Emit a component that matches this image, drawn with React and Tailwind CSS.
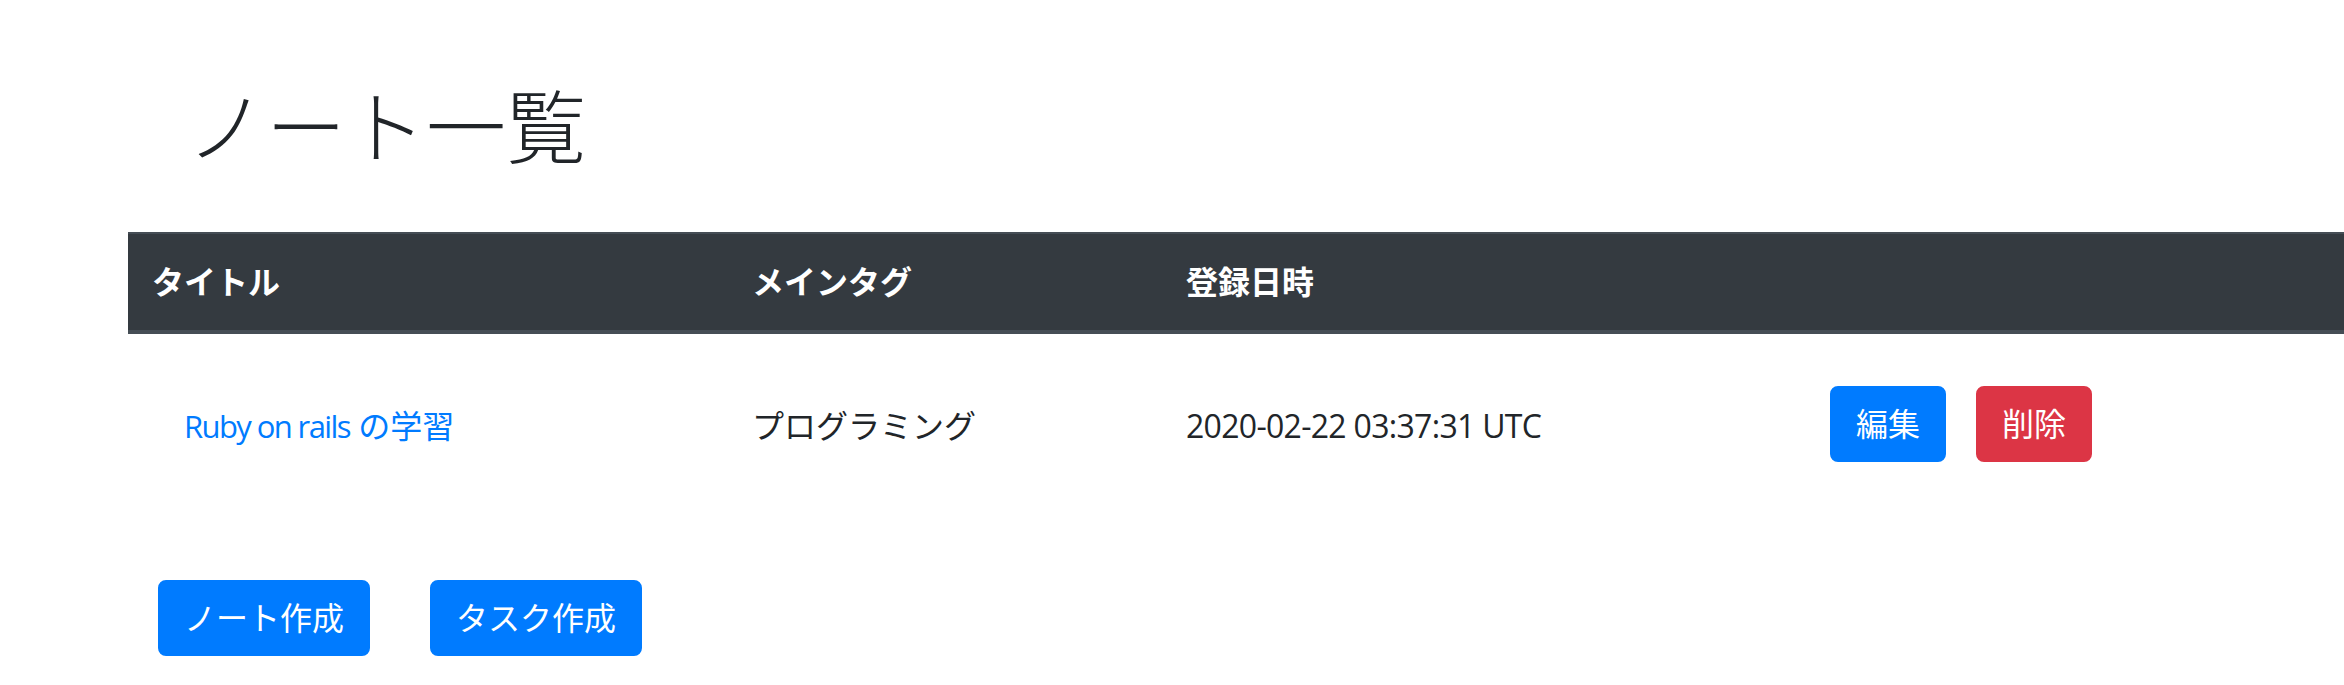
const FONT = "font-['Open_Sans','Noto_Sans_CJK_JP',sans-serif]";

const notes = [
  { id: 1, title: 'Ruby on rails', titleJa: 'の学習', tag: 'プログラミング', createdAt: '2020-02-22 03:37:31 UTC' }
];

function Btn({ color = 'blue', children }) {
  const bg = color === 'red' ? 'bg-[#dc3545] border-[#dc3545]' : 'bg-[#007bff] border-[#007bff]';
  return (
    <button className={`${bg} border-2 text-white text-[32px] leading-[48px] px-6 py-3 rounded-[8px] whitespace-nowrap`}>
      {children}
    </button>
  );
}

export default function App() {
  return (
    <div className={`${FONT} bg-white text-[#212529] min-h-[685px] overflow-hidden`}>
      <h1 className="text-[80px] leading-[96px] font-light pt-[78px] pl-[186px] text-[#212529]">
        ノート一覧
      </h1>

      <table className="mt-[58px] ml-[128px] w-[2216px] border-collapse text-[32px] leading-[48px]">
        <thead>
          <tr className="bg-[#343a40] text-white">
            <th className="w-[600px] text-left font-bold px-6 py-6 border-t-2 border-b-4 border-[#454d55]">タイトル</th>
            <th className="w-[434px] text-left font-bold px-6 py-6 border-t-2 border-b-4 border-[#454d55]">メインタグ</th>
            <th className="w-[644px] text-left font-bold px-6 py-6 border-t-2 border-b-4 border-[#454d55]">登録日時</th>
            <th className="text-left font-bold px-6 py-6 border-t-2 border-b-4 border-[#454d55]"></th>
          </tr>
        </thead>
        <tbody>
          {notes.map(note => (
            <tr key={note.id} className="h-[186px]">
              <td className="px-6 align-middle border-t-2 border-[#dee2e6]">
                <a href="#" className="text-[#007bff] pl-8">
                  <span className="text-[31px] tracking-[-1.6px]">{note.title}</span> {note.titleJa}
                </a>
              </td>
              <td className="px-6 align-middle border-t-2 border-[#dee2e6]">{note.tag}</td>
              <td className="px-6 align-middle border-t-2 border-[#dee2e6]">
                <span className="tracking-[-0.7px]">{note.createdAt}</span>
              </td>
              <td className="px-6 align-middle border-t-2 border-[#dee2e6]">
                <div className="flex gap-[30px] -mt-[4px]">
                  <Btn>編集</Btn>
                  <Btn color="red">削除</Btn>
                </div>
              </td>
            </tr>
          ))}
        </tbody>
      </table>

      <div className="flex gap-[60px] pl-[158px] mt-[62px]">
        <Btn>ノート作成</Btn>
        <Btn>タスク作成</Btn>
      </div>
    </div>
  );
}
